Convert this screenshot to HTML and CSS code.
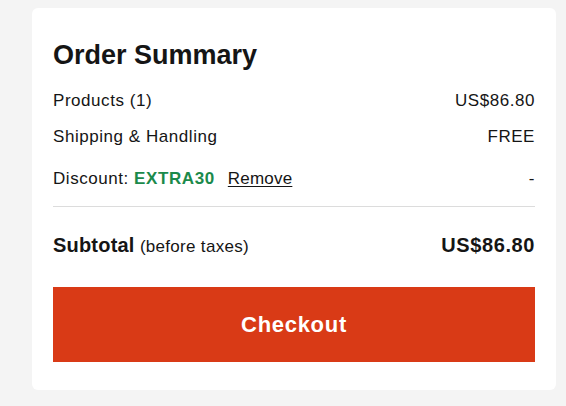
FILE: index.html
```html
<!DOCTYPE html>
<html lang="en">
<head>
<meta charset="utf-8">
<title>Order Summary</title>
<link rel="stylesheet" href="styles.css">
</head>
<body>
<section class="card">
  <h2 class="title">Order Summary</h2>
  <div class="row row-products">
    <span>Products (1)</span>
    <span>US$86.80</span>
  </div>
  <div class="row row-shipping">
    <span>Shipping &amp; Handling</span>
    <span>FREE</span>
  </div>
  <div class="row row-discount">
    <span class="discount">Discount: <strong class="code">EXTRA30</strong><a class="remove" href="#">Remove</a></span>
    <span>-</span>
  </div>
  <hr class="divider">
  <div class="row row-subtotal">
    <span><strong class="sub-label">Subtotal</strong> <span class="note">(before taxes)</span></span>
    <strong class="sub-value">US$86.80</strong>
  </div>
  <button class="checkout" type="button">Checkout</button>
</section>
</body>
</html>
```
FILE: styles.css
```css
* { box-sizing: border-box; }
html, body { margin: 0; }
body {
  background: #f4f4f4;
  padding: 8px 10px 16px 32px;
  font-family: "Liberation Sans", Arial, sans-serif;
  color: #151515;
}
.card {
  width: 524px;
  background: #ffffff;
  border-radius: 6px;
  padding: 32px 21px 28px;
}
.title {
  margin: 0;
  font-size: 27px;
  line-height: 30px;
  font-weight: 700;
  letter-spacing: 0;
}
.row {
  display: flex;
  justify-content: space-between;
  align-items: baseline;
  font-size: 17px;
  line-height: 24px;
  letter-spacing: 0.55px;
}
.row-products { margin-top: 19px; }
.row-shipping { margin-top: 12px; }
.row-discount { margin-top: 18px; }
.code {
  color: #1b8a4b;
  font-weight: 700;
  letter-spacing: 0.6px;
}
.remove {
  margin-left: 13px;
  color: #151515;
  letter-spacing: 0.2px;
  text-decoration: underline;
  text-underline-offset: 2px;
}
.divider {
  margin: 15px 0 0;
  border: 0;
  border-top: 1px solid #dcdcdc;
  height: 0;
}
.row-subtotal {
  margin-top: 25px;
  line-height: 26px;
}
.sub-label {
  font-size: 20px;
  font-weight: 700;
  letter-spacing: 0.2px;
}
.note {
  font-size: 17px;
  letter-spacing: 0.3px;
}
.sub-value {
  font-size: 20px;
  font-weight: 700;
  letter-spacing: 0.6px;
}
.checkout {
  display: block;
  width: 100%;
  height: 75px;
  margin-top: 27px;
  border: 0;
  border-radius: 0;
  background: #d93a16;
  color: #ffffff;
  font-family: "Liberation Sans", Arial, sans-serif;
  font-size: 22px;
  font-weight: 700;
  letter-spacing: 0.7px;
  cursor: pointer;
}
```
